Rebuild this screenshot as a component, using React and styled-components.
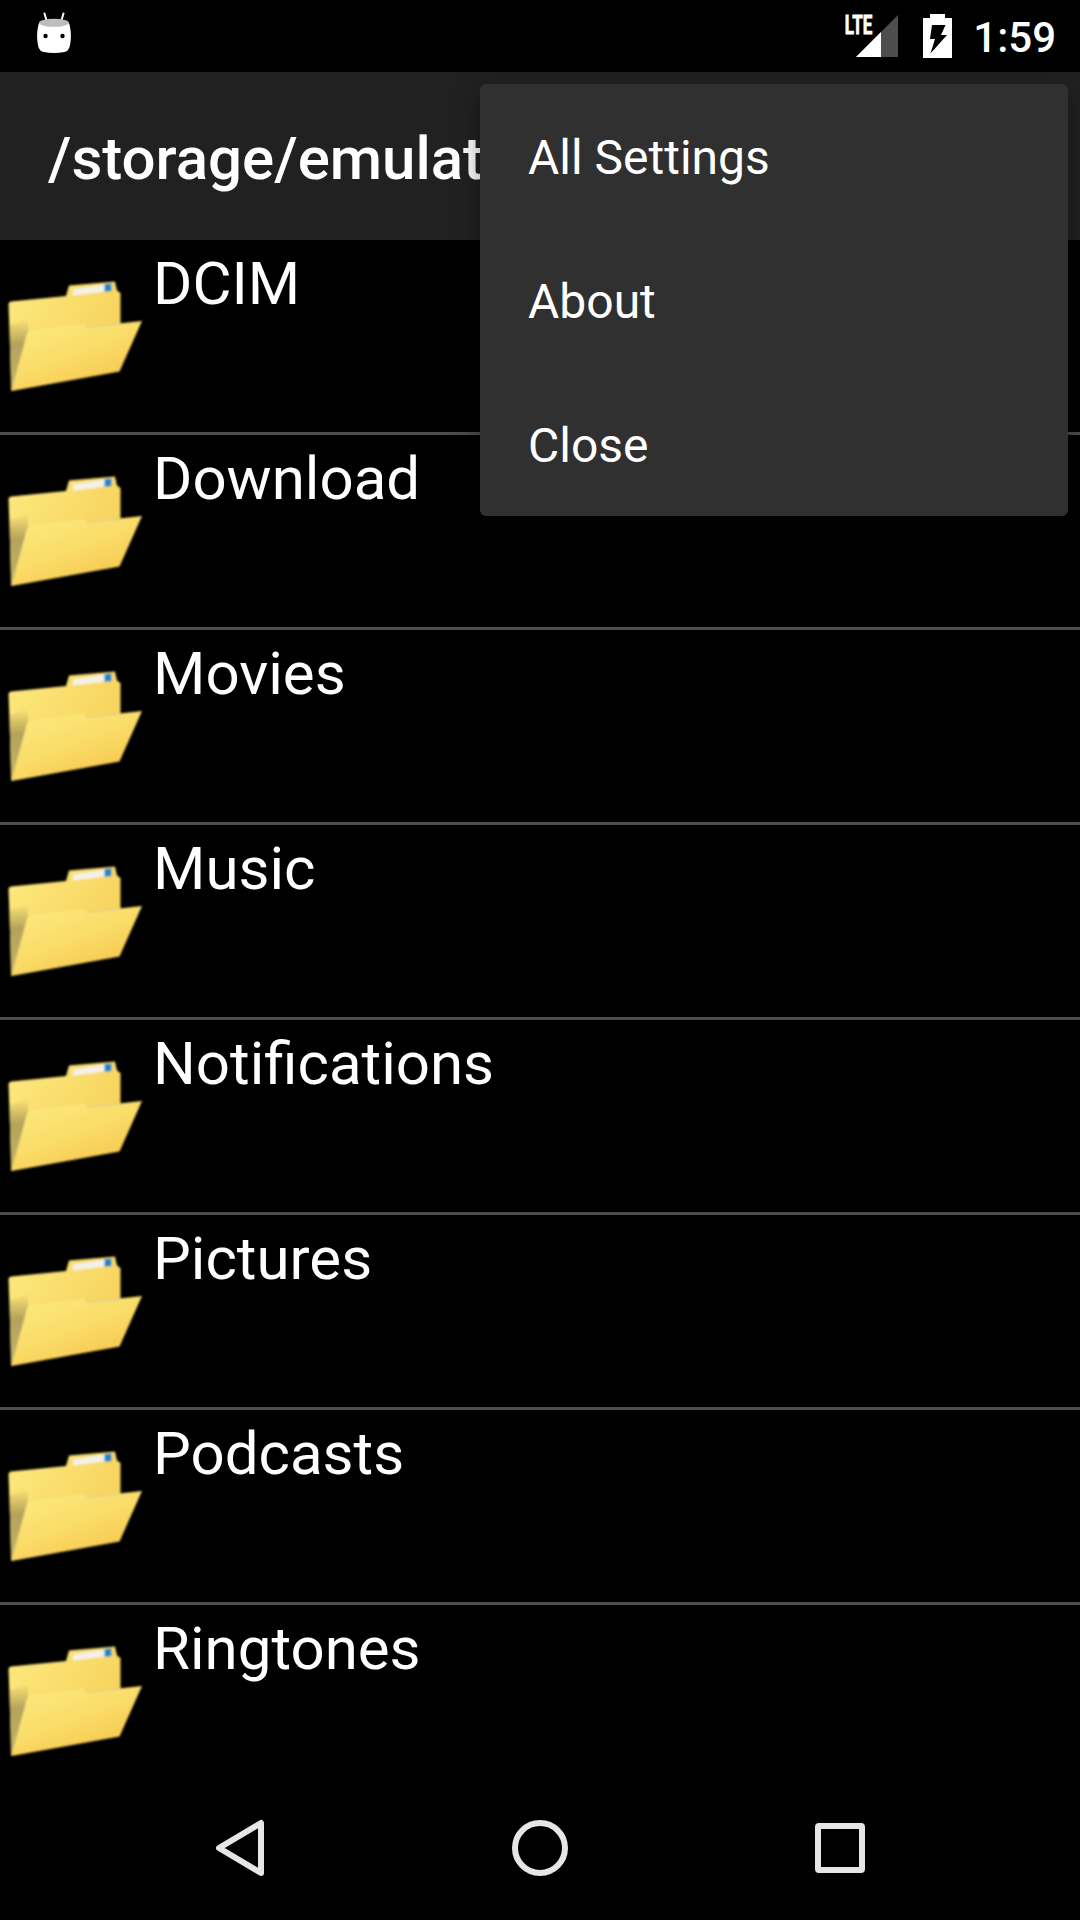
import React from "react";
import styled, { createGlobalStyle } from "styled-components";

const GlobalStyle = createGlobalStyle`
  body { margin: 0; background: #000; }
`;

const Screen = styled.div`
  position: relative;
  display: flex;
  flex-direction: column;
  width: 1080px;
  height: 1920px;
  overflow: hidden;
  background: #000;
  color: #fff;
  font-family: Roboto, sans-serif;
`;

const StatusBar = styled.header`
  display: flex;
  align-items: center;
  justify-content: space-between;
  flex: none;
  height: 72px;
  padding: 0 24px 0 36px;
`;

const StatusGroup = styled.div`
  display: flex;
  align-items: center;
  height: 72px;
`;

const Clock = styled.span`
  margin-left: 21px;
  font-size: 42px;
  line-height: 72px;
  font-weight: 500;
  padding-top: 3px;
`;

const Glyph = styled.svg`
  display: block;
  flex: none;
  overflow: visible;
`;

const TitleBar = styled.div`
  flex: none;
  height: 168px;
  padding-left: 48px;
  background: #212121;
`;

const Title = styled.h1`
  margin: 0;
  white-space: nowrap;
  font-size: 60px;
  line-height: 168px;
  font-weight: 500;
  padding-top: 3px;
`;

const List = styled.ul`
  flex: 1;
  margin: 0;
  padding: 0;
  overflow: hidden;
  list-style: none;
`;

const Row = styled.li`
  display: flex;
  height: 192px;
  border-bottom: 3px solid #4d4d4d;
  &:last-child { border-bottom: 0; }
`;

const Name = styled.span`
  margin-top: 9px;
  font-size: 60px;
  line-height: 70px;
`;

const Menu = styled.div`
  position: absolute;
  top: 84px;
  left: 480px;
  width: 588px;
  border-radius: 6px;
  background: #303030;
  box-shadow: 0 8px 28px rgba(0, 0, 0, 0.4);
`;

const MenuItem = styled.div`
  height: 144px;
  padding-left: 48px;
  font-size: 48px;
  line-height: 148px;
`;

const NavBar = styled.nav`
  display: flex;
  justify-content: center;
  flex: none;
  height: 144px;
  gap: 156px;
`;

const Robot = () => (
  <Glyph width="36" height="72" viewBox="36 0 36 72">
    <path d="M44.500 13.500L47 22M63.500 13.500L61 22" stroke="#fff" strokeWidth="2" strokeLinecap="round" />
    <path d="M39 23C36.500 31 36.500 41 38.800 48Q39.800 51 43.500 52Q54 53.800 64.500 52Q68.200 51 69.200 48C71.500 41 71.500 31 69 23Z" fill="#fff" />
    <ellipse cx="54" cy="22.800" rx="15" ry="4" fill="#bdbdbd" />
    <circle cx="45.500" cy="36" r="2.200" fill="#000" />
    <circle cx="62.500" cy="36" r="2.200" fill="#000" />
  </Glyph>
);

const Signal = () => (
  <Glyph width="54" height="72" viewBox="844 0 54 72">
    <path d="M898 15V57H856Z" fill="#4d4d4d" />
    <path d="M881 32V57H856Z" fill="#fff" />
    <text
      x="844.800"
      y="33.700"
      fontSize="26"
      fontWeight="700"
      fill="#fff"
      stroke="#fff"
      strokeWidth="0.800"
      textLength="27.500"
      lengthAdjust="spacingAndGlyphs"
    >
      LTE
    </text>
  </Glyph>
);

const Battery = styled(Glyph)`
  margin-left: 25px;
`;

const BatteryIcon = () => (
  <Battery width="29" height="72" viewBox="923 0 29 72">
    <path d="M930 14H945V18H952V58H923V18H930Z" fill="#fff" />
    <path d="M932 25H945.500L941 35H947L930.500 53.500L935 39H930Z" fill="#000" />
  </Battery>
);

const FolderIcon = ({ id }) => (
  <Glyph width="153" height="192" viewBox="0 0 153 192">
    <defs>
      <linearGradient id={`${id}-back`} x1="0" y1="0" x2="1" y2="0.700">
        <stop offset="0" stopColor="#fdea80" />
        <stop offset="1" stopColor="#f6cf57" />
      </linearGradient>
      <linearGradient id={`${id}-front`} x1="0.100" y1="0" x2="0.800" y2="1">
        <stop offset="0" stopColor="#fcea80" />
        <stop offset="0.500" stopColor="#fadc68" />
        <stop offset="1" stopColor="#f5c348" />
      </linearGradient>
      <linearGradient id={`${id}-side`} x1="0" y1="0" x2="0" y2="1">
        <stop offset="0" stopColor="#b5a25c" stopOpacity="0" />
        <stop offset="0.350" stopColor="#b5a25c" />
        <stop offset="1" stopColor="#c8b66a" />
      </linearGradient>
      <filter id={`${id}-soft`} x="-5%" y="-5%" width="110%" height="110%">
        <feGaussianBlur stdDeviation="1.100" />
      </filter>
    </defs>
    <g filter={`url(#${id}-soft)`}>
      <path d="M8.500 64Q8.500 62 11 61.500L66 56L69 45.500L115 41.500L117 50.500L120.500 53V88L11.500 151Z" fill={`url(#${id}-back)`} />
      <path d="M73 49.500L105 44.500V51.500L73 55.500Z" fill="#f4f1e9" />
      <path d="M104.500 44L111.500 43.300V51.200L104.500 51.800Z" fill="#1f86c8" />
      <path d="M9.500 85L28 79V93L12 150.500H11Z" fill={`url(#${id}-side)`} />
      <path d="M27 93.500Q28 91 31 90.500L83 84L87 87L142 81L119.500 131.500L11.500 151Z" fill={`url(#${id}-front)`} />
      <path d="M87 87.500L120 84" stroke="#e3cf86" strokeWidth="1.500" fill="none" />
    </g>
  </Glyph>
);

const folders = ["DCIM", "Download", "Movies", "Music", "Notifications", "Pictures", "Podcasts", "Ringtones"];
const actions = ["All Settings", "About", "Close"];

export default function App() {
  return (
    <>
      <GlobalStyle />
      <Screen>
        <StatusBar>
          <Robot />
          <StatusGroup>
            <Signal />
            <BatteryIcon />
            <Clock>1:59</Clock>
          </StatusGroup>
        </StatusBar>
        <TitleBar>
          <Title>/storage/emulat</Title>
        </TitleBar>
        <List>
          {folders.map((name) => (
            <Row key={name}>
              <FolderIcon id={name} />
              <Name>{name}</Name>
            </Row>
          ))}
        </List>
        <NavBar>
          <Glyph width="144" height="144" viewBox="168 1776 144 144">
            <path d="M261 1823V1873L219 1848Z" fill="none" stroke="#e6e6e6" strokeWidth="6" strokeLinejoin="round" />
          </Glyph>
          <Glyph width="144" height="144" viewBox="468 1776 144 144">
            <circle cx="540" cy="1848" r="25" fill="none" stroke="#e6e6e6" strokeWidth="6" />
          </Glyph>
          <Glyph width="144" height="144" viewBox="768 1776 144 144">
            <rect x="818" y="1826" width="44" height="44" rx="1" fill="none" stroke="#e6e6e6" strokeWidth="6" />
          </Glyph>
        </NavBar>
        <Menu>
          {actions.map((label) => (
            <MenuItem key={label}>{label}</MenuItem>
          ))}
        </Menu>
      </Screen>
    </>
  );
}
